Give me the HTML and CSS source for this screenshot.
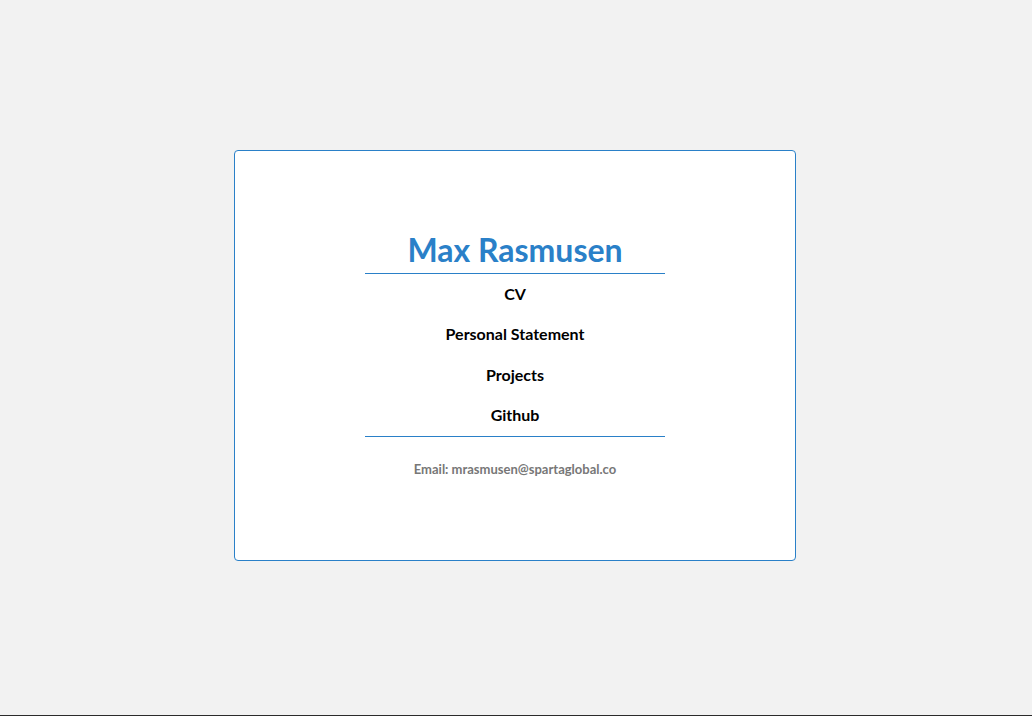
FILE: index.html
```html
<!DOCTYPE html>
<html>
<head>
<meta charset="utf-8">
<link rel="stylesheet" href="styles.css">
</head>
<body>
<div class="page">
  <div class="card">
    <h1 class="name">Max Rasmusen</h1>
    <ul class="nav">
      <li class="nav-item">CV</li>
      <li class="nav-item">Personal Statement</li>
      <li class="nav-item">Projects</li>
      <li class="nav-item">Github</li>
    </ul>
    <p class="email">Email: mrasmusen@spartaglobal.co</p>
  </div>
</div>
<div class="bottom-bar"></div>
</body>
</html>
```
FILE: styles.css
```css
html, body {
  margin: 0;
  padding: 0;
  background: #f2f2f2;
  font-family: Lato, "Open Sans", sans-serif;
}
.page {
  height: 715px;
  display: flex;
  align-items: center;
  justify-content: center;
}
.card {
  box-sizing: border-box;
  width: 562px;
  height: 411px;
  margin: 0 2px 4px 0;
  background: #fff;
  border: 1px solid #2a80c8;
  border-radius: 4px;
  display: flex;
  flex-direction: column;
  align-items: center;
  justify-content: center;
}
.name {
  margin: 0;
  font-size: 32px;
  font-weight: 700;
  line-height: 40px;
  color: #2a80c8;
  width: 300px;
  text-align: center;
  padding-bottom: 3px;
  border-bottom: 1px solid #2a80c8;
}
.nav {
  list-style: none;
  margin: 0;
  padding: 0;
  width: 300px;
  border-bottom: 1px solid #2a80c8;
}
.nav-item {
  height: 40.5px;
  line-height: 39px;
  text-align: center;
  font-size: 16px;
  font-weight: 700;
  color: #000;
}
.email {
  margin: 24px 0 5px;
  font-size: 13px;
  font-weight: 700;
  color: #777;
}
.bottom-bar {
  height: 1px;
  background: #2b2b2b;
}
```
